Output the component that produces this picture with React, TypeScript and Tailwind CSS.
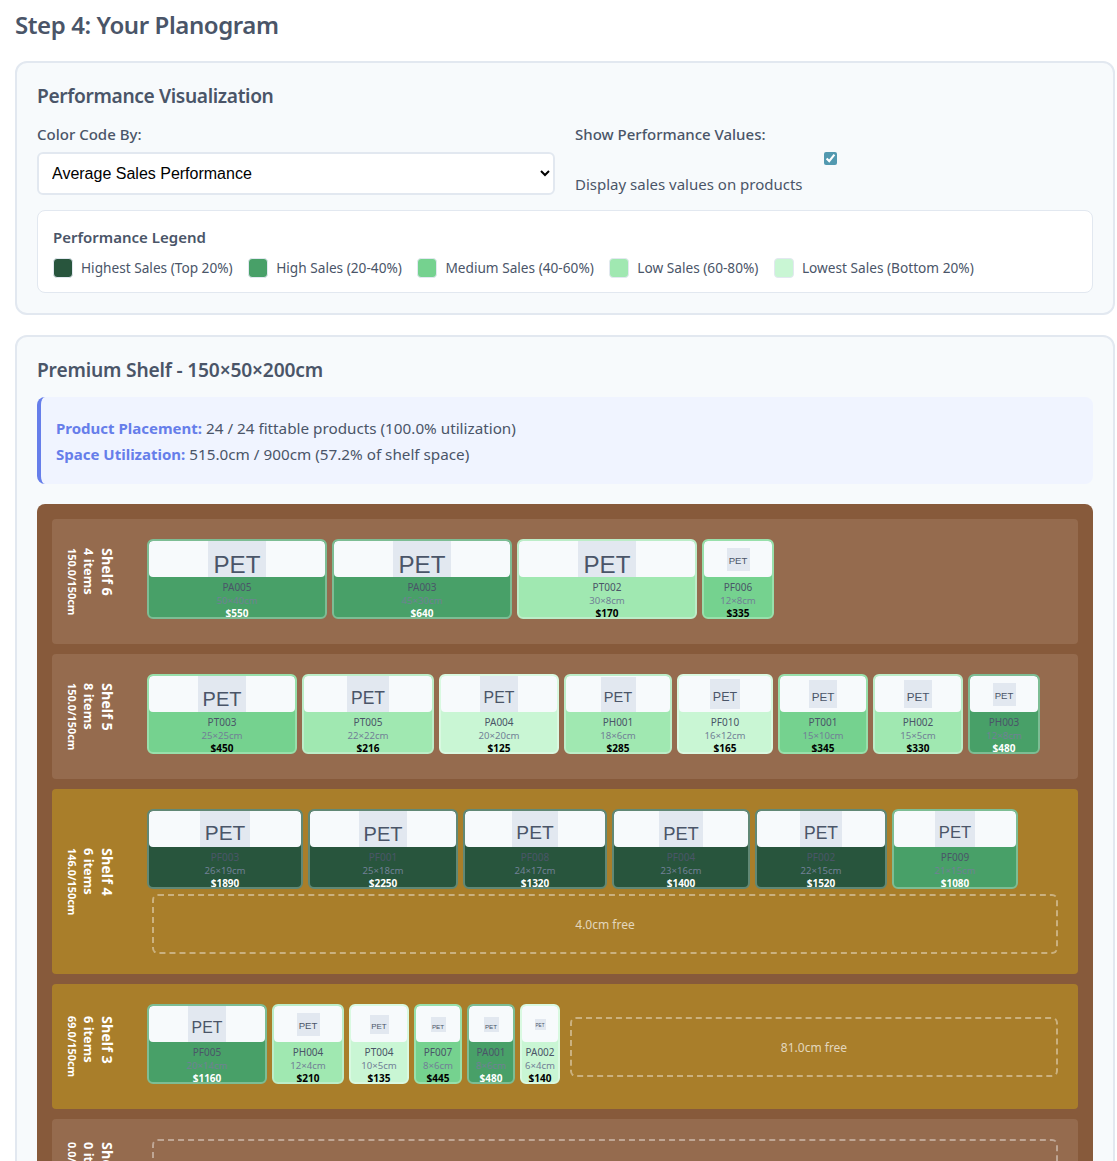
type Level = 'top' | 'high' | 'mid' | 'low' | 'lowest';

type Product = {
  code: string;
  dims: string;
  price: string;
  level: Level;
  width: number;
  box: number;
};

type Shelf = {
  name: string;
  items: string;
  used: string;
  bg: string;
  products: Product[];
  free?: string;
  freeClass?: string;
  labelClass?: string;
};

const levelClasses: Record<Level, string> = {
  top: 'bg-[#28553d] border-[#618875]',
  high: 'bg-[#48a068] border-[#7dbd94]',
  mid: 'bg-[#75d28f] border-[#98e0ab]',
  low: 'bg-[#a0e8b1] border-[#bcedc8]',
  lowest: 'bg-[#c9f6d4] border-[#d9f9e1]',
};

const priceClasses: Record<Level, string> = {
  top: 'text-white',
  high: 'text-white',
  mid: 'text-black',
  low: 'text-black',
  lowest: 'text-black',
};

const legend = [
  { label: 'Highest Sales (Top 20%)', color: 'bg-[#28553d]' },
  { label: 'High Sales (20-40%)', color: 'bg-[#48a068]' },
  { label: 'Medium Sales (40-60%)', color: 'bg-[#75d28f]' },
  { label: 'Low Sales (60-80%)', color: 'bg-[#a0e8b1]' },
  { label: 'Lowest Sales (Bottom 20%)', color: 'bg-[#c9f6d4]' },
];

const woodBg = 'bg-[#956b4e]';
const goldBg = 'bg-[#a97e2a]';

const shelves: Shelf[] = [
  {
    name: 'Shelf 6',
    items: '4 items',
    used: '150.0/150cm',
    bg: woodBg,
    products: [
      { code: 'PA005', dims: '50×40cm', price: '$550', level: 'high', width: 180, box: 58 },
      { code: 'PA003', dims: '45×30cm', price: '$640', level: 'high', width: 180, box: 58 },
      { code: 'PT002', dims: '30×8cm', price: '$170', level: 'low', width: 180, box: 58 },
      { code: 'PF006', dims: '12×8cm', price: '$335', level: 'mid', width: 72, box: 23 },
    ],
  },
  {
    name: 'Shelf 5',
    items: '8 items',
    used: '150.0/150cm',
    bg: woodBg,
    products: [
      { code: 'PT003', dims: '25×25cm', price: '$450', level: 'mid', width: 150, box: 48 },
      { code: 'PT005', dims: '22×22cm', price: '$216', level: 'low', width: 132, box: 42 },
      { code: 'PA004', dims: '20×20cm', price: '$125', level: 'lowest', width: 120, box: 38 },
      { code: 'PH001', dims: '18×6cm', price: '$285', level: 'low', width: 108, box: 35 },
      { code: 'PF010', dims: '16×12cm', price: '$165', level: 'lowest', width: 96, box: 30 },
      { code: 'PT001', dims: '15×10cm', price: '$345', level: 'mid', width: 90, box: 28 },
      { code: 'PH002', dims: '15×5cm', price: '$330', level: 'low', width: 90, box: 28 },
      { code: 'PH003', dims: '12×8cm', price: '$480', level: 'high', width: 72, box: 23 },
    ],
  },
  {
    name: 'Shelf 4',
    items: '6 items',
    used: '146.0/150cm',
    bg: goldBg,
    free: '4.0cm free',
    products: [
      { code: 'PF003', dims: '26×19cm', price: '$1890', level: 'top', width: 156, box: 50 },
      { code: 'PF001', dims: '25×18cm', price: '$2250', level: 'top', width: 150, box: 48 },
      { code: 'PF008', dims: '24×17cm', price: '$1320', level: 'top', width: 144, box: 46 },
      { code: 'PF004', dims: '23×16cm', price: '$1400', level: 'top', width: 138, box: 44 },
      { code: 'PF002', dims: '22×15cm', price: '$1520', level: 'top', width: 132, box: 42 },
      { code: 'PF009', dims: '21×15cm', price: '$1080', level: 'high', width: 126, box: 40 },
    ],
  },
  {
    name: 'Shelf 3',
    items: '6 items',
    used: '69.0/150cm',
    bg: goldBg,
    free: '81.0cm free',
    freeClass: 'mt-[13px]',
    products: [
      { code: 'PF005', dims: '20×14cm', price: '$1160', level: 'high', width: 120, box: 38 },
      { code: 'PH004', dims: '12×4cm', price: '$210', level: 'low', width: 72, box: 23 },
      { code: 'PT004', dims: '10×5cm', price: '$135', level: 'lowest', width: 60, box: 19 },
      { code: 'PF007', dims: '8×6cm', price: '$445', level: 'mid', width: 48, box: 15 },
      { code: 'PA001', dims: '8×6cm', price: '$480', level: 'high', width: 48, box: 15 },
      { code: 'PA002', dims: '6×4cm', price: '$140', level: 'lowest', width: 40, box: 11 },
    ],
  },
  {
    name: 'Shelf 2',
    items: '0 items',
    used: '0.0/150cm',
    bg: woodBg,
    free: '150.0cm free',
    labelClass: 'pb-6',
    products: [],
  },
];

// the PET placeholder sits a bit low in its box, more when the box is clipped
function petOffset(box: number) {
  if (box >= 58) return 13;
  if (box === 40 || box === 38 || box === 50) return 7;
  if (box >= 42) return 9;
  if (box >= 30) return 7;
  return 5;
}

function ProductCard({ product }: { product: Product }) {
  const boxHeight = Math.min(product.box, 36);
  return (
    <div
      className={`h-20 shrink-0 overflow-hidden rounded-md border-2 text-center ${levelClasses[product.level]}`}
      style={{ width: product.width }}
    >
      <div className="flex h-9 items-center justify-center overflow-hidden rounded-[4px] bg-[#f7fafc]">
        <div
          className="flex shrink-0 items-center justify-center bg-[#e2e8f0] font-['Liberation_Sans',sans-serif] text-[#4a5568]"
          style={{
            width: product.box,
            height: boxHeight,
            fontSize: product.box / 2.4,
            paddingTop: petOffset(product.box),
          }}
        >
          PET
        </div>
      </div>
      <div className="mt-[2.5px] text-[10px] leading-[14px] text-[#4a5568]">{product.code}</div>
      <div className="text-[9.6px] leading-[14px] text-[#718096]">{product.dims}</div>
      <div className={`-mt-[2px] text-[10px] font-bold leading-[14px] ${priceClasses[product.level]}`}>
        {product.price}
      </div>
    </div>
  );
}

function ShelfRow({ shelf }: { shelf: Shelf }) {
  return (
    <div className={`flex min-h-[125px] items-stretch rounded-[4px] ${shelf.bg}`}>
      <div className={`mr-[19px] flex w-[76px] shrink-0 items-center justify-center ${shelf.labelClass ?? ''}`}>
        <div className="font-bold text-white [writing-mode:vertical-rl]">
          <div className="text-[14.4px] leading-[20px]">{shelf.name}</div>
          <div className="text-[12.8px] leading-[17px]">{shelf.items}</div>
          <div className="text-[10.9px] leading-[16px]">{shelf.used}</div>
        </div>
      </div>
      <div className="flex flex-1 flex-wrap content-start items-start gap-[5px] py-5 pr-[15px]">
        {shelf.products.map((product) => (
          <ProductCard key={product.code} product={product} />
        ))}
        {shelf.free && (
          <div
            className={`mx-[5px] flex h-[60px] min-w-0 flex-1 basis-[200px] items-center justify-center rounded-[6px] border-2 border-dashed border-white/40 pt-[2px] text-[12px] text-white/70 ${shelf.freeClass ?? ''}`}
          >
            {shelf.free}
          </div>
        )}
      </div>
    </div>
  );
}

export default function App() {
  return (
    <div className="h-[1161px] overflow-hidden bg-white pl-[15px] pr-[2px] pt-[7px] font-['Noto_Sans',sans-serif] text-[#4a5568]">
      <h2 className="text-[24px] font-semibold leading-9 tracking-[-0.41px]">Step 4: Your Planogram</h2>

      <div className="mt-[18px] rounded-xl border-2 border-[#e2e8f0] bg-[#f7fafc] p-5">
        <h3 className="text-[19.2px] font-semibold leading-[26px] tracking-[-0.36px]">Performance Visualization</h3>

        <div className="mt-[14px] grid grid-cols-2 gap-5">
          <div>
            <label className="block text-[15px] font-medium leading-[22px]">Color Code By:</label>
            <select
              defaultValue="avg"
              className="mt-[7px] h-[43px] w-full rounded-md border-2 border-[#e2e8f0] bg-white pl-[9px] font-['Liberation_Sans',sans-serif] text-[16px] text-black"
            >
              <option value="avg">Average Sales Performance</option>
            </select>
          </div>
          <div>
            <label className="block text-[15px] font-medium leading-[22px]">Show Performance Values:</label>
            <input
              type="checkbox"
              defaultChecked
              className="mt-[7px] ml-[249px] block h-[13px] w-[13px] accent-[#5299b0]"
            />
            <div className="mt-2 text-[15px] leading-[22px]">Display sales values on products</div>
          </div>
        </div>

        <div className="mt-[15px] rounded-lg border border-[#e2e8f0] bg-white pb-[14px] pl-[15px] pr-[15px] pt-[15px]">
          <h4 className="text-[15px] font-semibold leading-[22px]">Performance Legend</h4>
          <div className="mt-[10px] flex items-center gap-[15.5px]">
            {legend.map((item) => (
              <div key={item.label} className="flex items-center gap-2">
                <span className={`h-5 w-5 rounded-[4px] border border-[#e2e8f0] ${item.color}`} />
                <span className="text-[13.66px] leading-5">{item.label}</span>
              </div>
            ))}
          </div>
        </div>
      </div>

      <div className="mt-5 rounded-xl border-2 border-[#e2e8f0] bg-[#f7fafc] p-5">
        <h3 className="text-[19.2px] font-semibold leading-[26px] tracking-[-0.18px]">Premium Shelf - 150×50×200cm</h3>

        <div className="mt-[14px] rounded-lg border-l-4 border-[#667eea] bg-[#f0f4ff] pb-[17px] pl-[15px] pt-[18px] text-[15.25px] leading-[26px]">
          <div>
            <span className="text-[15px] font-bold text-[#667eea]">Product Placement:</span> 24 / 24 fittable products (100.0% utilization)
          </div>
          <div>
            <span className="text-[15px] font-bold text-[#667eea]">Space Utilization:</span> 515.0cm / 900cm (57.2% of shelf space)
          </div>
        </div>

        <div className="mt-5 flex flex-col gap-[10px] rounded-lg bg-[#875a3b] p-[15px]">
          {shelves.map((shelf) => (
            <ShelfRow key={shelf.name} shelf={shelf} />
          ))}
        </div>
      </div>
    </div>
  );
}
